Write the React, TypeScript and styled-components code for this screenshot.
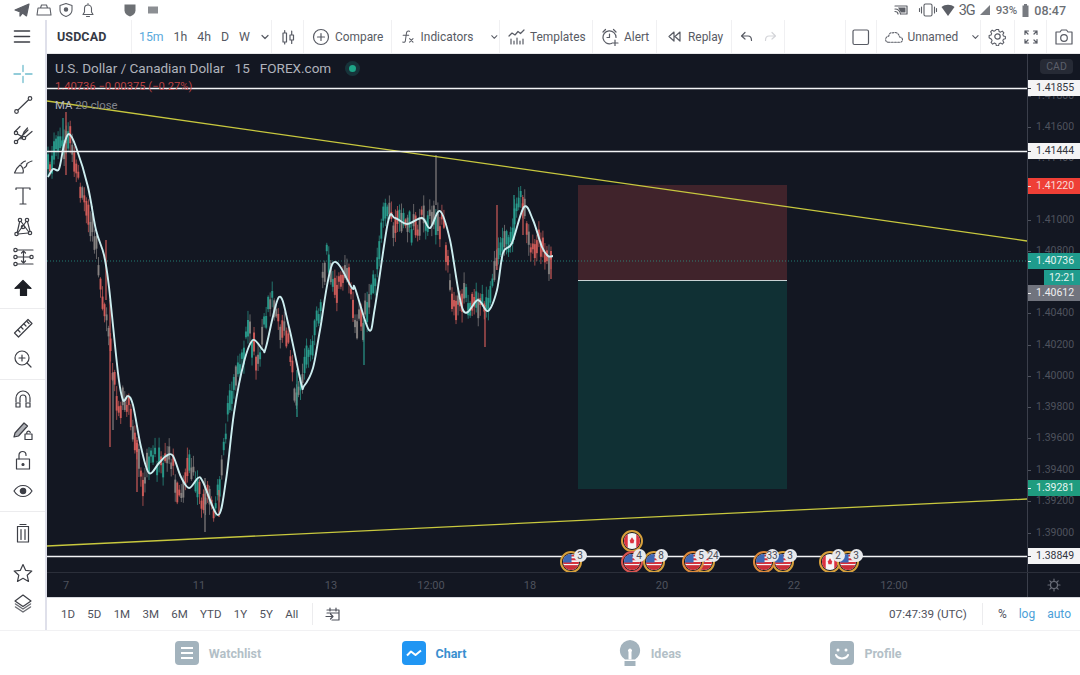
import React from 'react';
import styled, { createGlobalStyle } from 'styled-components';

const GlobalStyle = createGlobalStyle`
  html, body {
    margin: 0;
    padding: 0;
    background: #fff;
  }
  body {
    font-family: Roboto, "Liberation Sans", sans-serif;
  }
`;

const Page = styled.div`
  width: 1080px;
  height: 675px;
  display: flex;
  flex-direction: column;
  overflow: hidden;
  background: #fff;
  color: #4a4d57;
`;

const Spacer = styled.span<{ $w: number }>`
  width: ${({ $w }) => $w}px;
  flex: none;
`;

/* status bar */

const StatusBar = styled.div`
  height: 20px;
  flex: none;
  display: flex;
  align-items: center;
  justify-content: space-between;
  padding: 0 14px 0 14px;
  color: #5c5f66;
`;

const StatusGroup = styled.div<{ $gap: number }>`
  display: flex;
  align-items: center;
  gap: ${({ $gap }) => $gap}px;
`;

const Carrier = styled.span`
  font-size: 14.5px;
  letter-spacing: -1px;
  color: #62656b;
`;

const StatusText = styled.span<{ $size: number }>`
  font-size: ${({ $size }) => $size}px;
  font-weight: 500;
  color: #6c6f75;
`;

/* main frame */

const Workspace = styled.div`
  flex: 1;
  display: flex;
  min-height: 0;
`;

const LeftBar = styled.div`
  width: 45px;
  flex: none;
  display: flex;
  flex-direction: column;
  border-right: 2px solid #dfe0ea;
  color: #3d3f46;
`;

const MenuCell = styled.div`
  height: 34px;
  flex: none;
  display: flex;
  align-items: center;
  justify-content: center;
  margin-bottom: 5px;
  padding-right: 1px;
`;

const ToolGroup = styled.div<{ $top?: number }>`
  display: flex;
  flex-direction: column;
  padding: ${({ $top }) => $top ?? 0}px 0 5px;
`;

const ToolSlot = styled.div`
  height: 30.5px;
  display: flex;
  align-items: center;
  justify-content: center;
`;

const ToolDivider = styled.div<{ $gap?: number }>`
  height: 1px;
  background: #ececee;
  margin-bottom: ${({ $gap }) => $gap ?? 4}px;
`;

const MainColumn = styled.div`
  flex: 1;
  display: flex;
  flex-direction: column;
  min-width: 0;
`;

const TopToolbar = styled.div`
  height: 33px;
  flex: none;
  display: flex;
  align-items: stretch;
  font-size: 11.9px;
  border-bottom: 1px solid #e8e8ea;
`;

const Segment = styled.div<{ $width?: number; $gap?: number; $pad?: number; $plain?: boolean }>`
  width: ${({ $width }) => ($width ? `${$width}px` : 'auto')};
  flex: ${({ $width }) => ($width ? 'none' : '1')};
  display: flex;
  align-items: center;
  justify-content: ${({ $pad }) => ($pad === undefined ? 'center' : 'flex-start')};
  gap: ${({ $gap }) => $gap ?? 0}px;
  padding-left: ${({ $pad }) => $pad ?? 0}px;
  box-sizing: border-box;
  border-right: ${({ $plain }) => ($plain ? 'none' : '1px solid #f0f0f2')};
  color: #585b64;
  white-space: nowrap;
`;

const SymbolName = styled.span`
  font-size: 12.5px;
  font-weight: 700;
  color: #363a45;
  letter-spacing: 0.1px;
`;

const Interval = styled.span<{ $active?: boolean }>`
  font-size: 12.3px;
  color: ${({ $active }) => ($active ? '#5aa9dc' : '#555862')};
`;

const MutedIcon = styled.span`
  display: flex;
  color: #d4d5d9;
`;

/* chart */

const ChartArea = styled.div`
  flex: 1;
  display: flex;
  flex-direction: column;
  min-height: 0;
  background: #131722;
`;

const ChartRow = styled.div`
  flex: 1;
  display: flex;
  min-height: 0;
`;

const Pane = styled.div`
  position: relative;
  flex: 1;
  min-width: 0;
  overflow: hidden;
`;

const PaneDrawing = styled.svg`
  display: block;
  width: 980px;
  height: 519px;
`;

const Legend = styled.div`
  position: absolute;
  left: 8px;
  top: 6px;
  display: flex;
  flex-direction: column;
`;

const LegendTitle = styled.div`
  height: 16px;
  display: flex;
  align-items: center;
  font-size: 13.5px;
  color: #b0b3bc;
  white-space: pre;
`;

const StatusDot = styled.span`
  width: 7px;
  height: 7px;
  margin-left: 18px;
  border-radius: 50%;
  background: #1ea588;
  box-shadow: 0 0 0 4px rgba(38, 166, 154, 0.2);
`;

const LegendValues = styled.div`
  margin-top: 4px;
  height: 14px;
  font-size: 11.2px;
  line-height: 14px;
  color: #bb4244;
`;

const LegendStudy = styled.div`
  margin-top: 5px;
  height: 14px;
  font-size: 11.3px;
  line-height: 14px;
  color: #82858d;

  b {
    font-weight: 400;
    color: #b4b7be;
  }
`;

const EventPin = styled.div<{ $x: number; $y: number; $ring: string }>`
  position: absolute;
  left: ${({ $x }) => $x - 47 - 11}px;
  top: ${({ $y }) => $y - 54 - 11}px;
  width: 22px;
  height: 22px;
  box-sizing: border-box;
  border-radius: 50%;
  border: 2px solid ${({ $ring }) => $ring};
  background: #131722;
  display: flex;
  align-items: center;
  justify-content: center;
`;

const EventCount = styled.div<{ $x: number }>`
  position: absolute;
  left: ${({ $x }) => $x - 47 - 6.5}px;
  top: ${555 - 54 - 6.5}px;
  min-width: 13px;
  height: 13px;
  border-radius: 7px;
  background: #e8e9ec;
  color: #4a4d57;
  font-size: 10px;
  line-height: 13px;
  text-align: center;
`;

const PriceScale = styled.div`
  position: relative;
  width: 53px;
  flex: none;
  border-left: 1px solid #3b3f4b;
  box-sizing: border-box;
  overflow: hidden;
`;

const CurrencyChip = styled.div`
  position: absolute;
  left: 12px;
  top: 5px;
  width: 33px;
  height: 15px;
  border-radius: 4px;
  background: #262a35;
  color: #5b5f6a;
  font-size: 10.5px;
  line-height: 15px;
  text-align: center;
`;

const PriceTick = styled.div<{ $y: number }>`
  position: absolute;
  left: 0;
  right: 0;
  top: ${({ $y }) => $y - 54 - 7}px;
  height: 14px;
  padding-left: 8px;
  font-size: 10.5px;
  line-height: 14px;
  color: #4e525d;

  &::before {
    content: '';
    position: absolute;
    left: 0;
    top: 7px;
    width: 3px;
    height: 1px;
    background: #4e525d;
  }
`;

const PriceBadge = styled.div<{ $y: number; $bg: string; $fg: string }>`
  position: absolute;
  left: 0;
  right: 0;
  top: ${({ $y }) => $y - 54 - 8}px;
  height: 16px;
  padding-left: 8px;
  background: ${({ $bg }) => $bg};
  color: ${({ $fg }) => $fg};
  font-size: 10.5px;
  line-height: 16px;

  &::before {
    content: '';
    position: absolute;
    left: 0;
    top: 8px;
    width: 3px;
    height: 1px;
    background: ${({ $fg }) => $fg};
  }
`;

const Countdown = styled.div`
  position: absolute;
  right: 0;
  top: ${270 - 54}px;
  width: 36px;
  height: 15px;
  background: #1f9c8d;
  color: #e4f4f1;
  font-size: 10.5px;
  line-height: 15px;
  text-align: center;
`;

const TimeRow = styled.div`
  height: 24px;
  flex: none;
  display: flex;
  border-top: 1px solid #2b2f3a;
`;

const TimeScale = styled.div`
  position: relative;
  flex: 1;
`;

const TimeLabel = styled.span<{ $x: number }>`
  position: absolute;
  left: ${({ $x }) => $x - 47}px;
  top: 6px;
  transform: translateX(-50%);
  font-size: 11px;
  line-height: 14px;
  color: #4e525d;
`;

const ScaleCorner = styled.div`
  width: 53px;
  flex: none;
  box-sizing: border-box;
  border-left: 1px solid #3b3f4b;
  display: flex;
  align-items: center;
  justify-content: center;
  color: #6a6e79;
`;

/* bottom toolbar */

const BottomToolbar = styled.div`
  height: 33px;
  flex: none;
  display: flex;
  align-items: center;
  padding-left: 14px;
  font-size: 11.5px;
  color: #4f525c;
  border-top: 1px solid #d8d9de;
  box-sizing: border-box;
`;

const Ranges = styled.div`
  display: flex;
  gap: 12.3px;
  padding-right: 14px;
  height: 22px;
  align-items: center;
  border-right: 1px solid #ececee;
`;

const CalendarSlot = styled.div`
  margin-left: 12px;
  display: flex;
  align-items: center;
`;

const ClockText = styled.div`
  margin-left: auto;
  padding-right: 15px;
  height: 22px;
  line-height: 22px;
  font-size: 11.7px;
  border-right: 1px solid #ececee;
`;

const ScaleOptions = styled.div`
  display: flex;
  align-items: center;
  padding: 0 9px 0 15px;
  gap: 12px;
  font-size: 12px;
`;

const ScaleOption = styled.span<{ $on?: boolean }>`
  color: ${({ $on }) => ($on ? '#4c9fd8' : '#4f525c')};
`;

/* tabs */

const TabBar = styled.div`
  height: 45px;
  flex: none;
  display: grid;
  grid-template-columns: repeat(4, 1fr);
  padding: 0 106px 0 110px;
  border-top: 1px solid #f1f1f3;
  box-sizing: border-box;
`;

const TabItem = styled.div<{ $active?: boolean }>`
  display: flex;
  align-items: center;
  justify-content: center;
  gap: 10px;
  font-size: 12.5px;
  font-weight: 700;
  color: ${({ $active }) => ($active ? '#3a8fcf' : '#b3bfc7')};
`;

/* icons */

const Ico: React.FC<{ s?: number; w?: number; sw?: number; children: React.ReactNode }> = ({
  s = 24,
  w,
  sw = 1.2,
  children,
}) => (
  <svg
    width={w ?? s}
    height={s}
    viewBox={`0 0 ${w ?? s} ${s}`}
    fill="none"
    stroke="currentColor"
    strokeWidth={sw}
    strokeLinecap="round"
    strokeLinejoin="round"
  >
    {children}
  </svg>
);

const Chevron = () => (
  <Ico s={10}>
    <path d="M2 3.5 5 6.5 8 3.5" />
  </Ico>
);

const ToolIcons: Record<string, React.ReactNode> = {
  cross: (
    <g stroke="#6fbccd" strokeWidth="1.3">
      <path d="M11 2.5v6M11 13.5v6M2 11h6.5M13.5 11H20" />
    </g>
  ),
  line: (
    <>
      <circle cx="4.5" cy="17.5" r="1.8" />
      <circle cx="18" cy="4.5" r="1.8" />
      <path d="M6 16 16.6 5.8" />
    </>
  ),
  fork: (
    <>
      <circle cx="4" cy="18" r="1.7" />
      <circle cx="4" cy="9" r="1.7" />
      <circle cx="12" cy="14" r="1.7" />
      <path d="M5.2 16.7 16 6M5.5 10l5 3M2.5 8 8 2.5M13.5 13 20 7.5M9 15l3-7 3.5-4" />
    </>
  ),
  brush: (
    <>
      <path d="M2.5 18h8.5c1-3-.5-6.5-3-8-2.5 2-4.5 5-5.5 8Z" />
      <path d="M9 9c2-2 3-3 4.5-3M12 13c2-1 3-3 3-4.5 1.5-1 3-2 5-2.5" />
    </>
  ),
  text: <path d="M4 4.5V3h14v1.5M11 3v16M8 19h6" />,
  pattern: (
    <>
      <circle cx="4.5" cy="18" r="1.7" />
      <circle cx="8" cy="4" r="1.7" />
      <circle cx="15" cy="4" r="1.7" />
      <circle cx="18" cy="17" r="1.7" />
      <circle cx="11" cy="11" r="1.7" />
      <path d="m5.2 16.5 2.5-11M9 5.5 16.8 16M14.2 5.5 5.7 17M15.5 5.7 18 15.3M6 18l10.3-1" />
    </>
  ),
  measure: (
    <>
      <circle cx="3.5" cy="4" r="1.7" />
      <circle cx="3.5" cy="11" r="1.7" />
      <circle cx="3.5" cy="18" r="1.7" />
      <circle cx="19.5" cy="11" r="1.7" />
      <path d="M5.2 4H21M5.2 11H18M5.2 18H21M11.5 5.5v11" />
      <path d="m9.5 7 2-2 2 2M9.5 15l2 2 2-2" />
    </>
  ),
  arrow: <path d="M11 3.5 19 11.5 14.5 11 14.5 18.5H8.5L8.5 11 3 11.5Z" fill="#1c1e24" stroke="#1c1e24" />,
  ruler: (
    <>
      <path d="M2.5 16 16 2.5l4 4L6.5 20Z" />
      <path d="m6 13 2 2M9 10l2 2M12 7l2 2M15 4.5l2 2" />
    </>
  ),
  zoom: (
    <>
      <circle cx="10" cy="10" r="7" />
      <path d="M15 15l4 4M10 7v6M7 10h6" />
    </>
  ),
  magnet: (
    <>
      <path d="M4 14V10a7 7 0 0 1 14 0v4" />
      <path d="M8 14v-4a3 3 0 0 1 6 0v4" />
      <path d="M4 15h4v4H4zM14 15h4v4h-4z" />
    </>
  ),
  pencil: (
    <>
      <path d="M3 14 12 4l3.5 3-9 10-4.5 1Z" fill="#aeb0b5" />
      <path d="M13 15h7v5.5h-7zM14.8 15v-1.5a1.8 1.8 0 0 1 3.5 0" />
    </>
  ),
  lock: (
    <>
      <path d="M4.5 10h13v10h-13z" />
      <path d="M7 10V6a3.5 3.5 0 0 1 7 0v.5" />
      <circle cx="11" cy="15.5" r="1" fill="currentColor" />
    </>
  ),
  eye: (
    <>
      <path d="M2 11c2.5-4 5.5-5.5 9-5.5s6.5 1.5 9 5.5c-2.5 4-5.5 5.5-9 5.5S4.5 15 2 11Z" />
      <circle cx="11" cy="11" r="2.7" fill="currentColor" />
    </>
  ),
  trash: (
    <>
      <path d="M5.5 4.5h11V20h-11z" />
      <path d="M8 2.5h6M9 7.5v10M13 7.5v10M5.5 4.5h11" />
    </>
  ),
  star: <path d="m11 2.5 2.6 5.8 6.2.7-4.6 4.2 1.3 6.2L11 16.3l-5.5 3.1 1.3-6.2L2.2 9l6.2-.7Z" />,
  layers: (
    <>
      <path d="M11 3 19 9l-8 5.5L3 9Z" />
      <path d="M3.5 12 11 17l7.5-5M3.5 15l7.5 5 7.5-5" stroke="#6d6f75" strokeWidth="1.5" />
    </>
  ),
};

const toolOrder = [
  ['cross', 'line', 'fork', 'brush', 'text', 'pattern', 'measure', 'arrow'],
  ['ruler', 'zoom'],
  ['magnet', 'pencil', 'lock', 'eye'],
];

const UsFlag = () => (
  <svg width="16" height="16" viewBox="0 0 15 15">
    <clipPath id="flagClipUs">
      <circle cx="7.5" cy="7.5" r="7.5" />
    </clipPath>
    <g clipPath="url(#flagClipUs)">
      <rect width="15" height="15" fill="#f3f3f5" />
      <path d="M0 1.5h15M0 5h15M0 8.5h15M0 12h15" stroke="#d6333d" strokeWidth="1.8" />
      <rect y="10.5" width="15" height="4.5" fill="#c92f38" />
      <rect width="8" height="8" fill="#3d68b5" />
    </g>
  </svg>
);

const CaFlag = () => (
  <svg width="16" height="16" viewBox="0 0 15 15">
    <clipPath id="flagClipCa">
      <circle cx="7.5" cy="7.5" r="7.5" />
    </clipPath>
    <g clipPath="url(#flagClipCa)">
      <rect width="15" height="15" fill="#f5f5f6" />
      <rect width="3.5" height="15" fill="#dc3340" />
      <rect x="11.5" width="3.5" height="15" fill="#dc3340" />
      <path d="M7.5 4 9.5 7 9 9.5H6L5.5 7Z" fill="#dc3340" />
    </g>
  </svg>
);

const events = [
  { x: 571, y: 562, flag: 'us', ring: '#d8a13c' },
  { x: 632, y: 541, flag: 'ca', ring: '#d8a13c' },
  { x: 632, y: 562, flag: 'us', ring: '#d95550' },
  { x: 654, y: 562, flag: 'us', ring: '#d8a13c' },
  { x: 704, y: 562, flag: 'us', ring: '#d8a13c' },
  { x: 693, y: 562, flag: 'us', ring: '#dd8a3a' },
  { x: 783, y: 562, flag: 'us', ring: '#d8a13c' },
  { x: 764, y: 562, flag: 'us', ring: '#dd8a3a' },
  { x: 830, y: 562, flag: 'ca', ring: '#d8a13c' },
  { x: 848, y: 562, flag: 'us', ring: '#d8a13c' },
];

const eventCounts = [
  { x: 580, text: '3' },
  { x: 639, text: '4' },
  { x: 661, text: '8' },
  { x: 701, text: '5' },
  { x: 713, text: '24' },
  { x: 772, text: '33' },
  { x: 790, text: '3' },
  { x: 838, text: '2' },
  { x: 856, text: '3' },
];

const priceTicks = [
  ['1.41800', 96],
  ['1.41600', 127],
  ['1.41400', 158],
  ['1.41000', 220],
  ['1.40800', 251],
  ['1.40400', 313],
  ['1.40200', 345],
  ['1.40000', 376],
  ['1.39800', 407],
  ['1.39600', 438],
  ['1.39400', 470],
  ['1.39200', 501],
  ['1.39000', 533],
] as const;

const priceBadges = [
  { y: 88, text: '1.41855', bg: '#f4f4f5', fg: '#33363f' },
  { y: 151, text: '1.41444', bg: '#f4f4f5', fg: '#33363f' },
  { y: 186, text: '1.41220', bg: '#ef3f36', fg: '#f7dcd9' },
  { y: 261, text: '1.40736', bg: '#1f9c8d', fg: '#e4f4f1' },
  { y: 292.5, text: '1.40612', bg: '#71747e', fg: '#eeeef0' },
  { y: 488, text: '1.39281', bg: '#1f9c7f', fg: '#e4f4f1' },
  { y: 556, text: '1.38849', bg: '#f4f4f5', fg: '#33363f' },
];

const timeLabels = [
  ['7', 66],
  ['11', 199],
  ['13', 331],
  ['12:00', 431],
  ['18', 530],
  ['20', 662],
  ['22', 794],
  ['12:00', 894],
] as const;

// moving average traced from the chart, page coordinates
const maPoints: [number, number][] = [
  [48, 177], [53, 169], [59, 169], [64, 145], [69, 134], [76, 147], [88, 187], [96, 230], [104, 255],
  [109, 287], [118, 373], [123, 400], [128, 396], [133, 405], [141, 447], [149, 473], [159, 463],
  [166, 456], [173, 456], [181, 477], [189, 488], [198, 478], [203, 482], [218, 515], [226, 480],
  [234, 413], [244, 362], [253, 340], [263, 350], [266, 347], [279, 297], [289, 327], [301, 383],
  [304, 386], [313, 368], [320, 330], [333, 263], [352, 288], [355, 288], [369, 330], [375, 307],
  [388, 222], [395, 218], [407, 224], [422, 218], [430, 228], [440, 211], [450, 240], [463, 310],
  [478, 300], [488, 311], [497, 290], [503, 253], [512, 243], [524, 207], [533, 220], [542, 247],
  [548, 256], [553, 256],
];

const maAt = (x: number) => {
  if (x <= maPoints[0][0]) return maPoints[0][1];
  for (let i = 1; i < maPoints.length; i++) {
    const [x1, y1] = maPoints[i];
    if (x <= x1) {
      const [x0, y0] = maPoints[i - 1];
      return y0 + ((y1 - y0) * (x - x0)) / (x1 - x0);
    }
  }
  return maPoints[maPoints.length - 1][1];
};

const smoothPath = (pts: [number, number][]) => {
  let d = `M${pts[0][0]} ${pts[0][1]}`;
  for (let i = 0; i < pts.length - 1; i++) {
    const p0 = pts[Math.max(i - 1, 0)];
    const p1 = pts[i];
    const p2 = pts[i + 1];
    const p3 = pts[Math.min(i + 2, pts.length - 1)];
    const c1x = p1[0] + (p2[0] - p0[0]) / 6;
    const c1y = p1[1] + (p2[1] - p0[1]) / 6;
    const c2x = p2[0] - (p3[0] - p1[0]) / 6;
    const c2y = p2[1] - (p3[1] - p1[1]) / 6;
    d += `C${c1x.toFixed(1)} ${c1y.toFixed(1)} ${c2x.toFixed(1)} ${c2y.toFixed(1)} ${p2[0]} ${p2[1]}`;
  }
  return d;
};

let seed = 4711;
const rand = () => {
  seed = (seed * 16807) % 2147483647;
  return seed / 2147483647;
};

const RED = '#e0625e';
const GREEN = '#2ba594';
const GREY = '#8f8a88';

const candles = Array.from({ length: 250 }, (_, i) => {
  const x = 48 + i * 2.02;
  const mid = maAt(Math.min(x + 6, 553)) + Math.sin(x / 3.1) * 9 + (rand() - 0.5) * 20;
  const bodyH = 5 + rand() * 15;
  const wickTop = mid - bodyH / 2 - 1 - rand() * 10;
  const wickBottom = mid + bodyH / 2 + 1 + rand() * 10;
  const slope = maAt(x + 8) - maAt(x - 2);
  const r = rand();
  const colour = r < 0.28 ? GREY : slope + (rand() - 0.5) * 18 > 0 ? RED : GREEN;
  return { x, mid, bodyH, wickTop, wickBottom, colour };
});

const spikes: [number, number, number, string][] = [
  [63, 118, 155, GREEN], [66, 112, 175, RED], [106, 240, 300, RED], [110, 300, 447, RED],
  [113, 372, 430, GREY], [137, 440, 492, RED], [205, 478, 532, GREY], [219, 490, 517, RED],
  [297, 370, 417, GREEN], [364, 320, 365, GREEN], [436, 155, 205, GREY], [485, 305, 347, RED],
  [497, 205, 270, RED], [514, 195, 240, GREEN], [523, 197, 235, RED], [551, 255, 279, RED],
];

const Chart = () => (
  <PaneDrawing viewBox="47 54 980 519">
    <rect x="578" y="185" width="209" height="95" fill="#40232b" />
    <rect x="578" y="281" width="209" height="208" fill="#103034" />
    <path d="M578 280.5H787" stroke="#c9d2d4" strokeWidth="1" />
    <path d="M47 261H1027" stroke="#2a9d8f" strokeOpacity="0.75" strokeDasharray="1 2" />
    {candles.map((c) => (
      <g key={c.x} stroke={c.colour} strokeOpacity="0.82">
        <path d={`M${c.x} ${c.wickTop}V${c.wickBottom}`} strokeWidth="0.8" />
        <path d={`M${c.x} ${c.mid - c.bodyH / 2}V${c.mid + c.bodyH / 2}`} strokeWidth="2" />
      </g>
    ))}
    {spikes.map(([x, y1, y2, colour]) => (
      <path key={x} d={`M${x} ${y1}V${y2}`} stroke={colour} strokeWidth="1.3" strokeOpacity="0.85" />
    ))}
    <path d={smoothPath(maPoints)} fill="none" stroke="#cdeef0" strokeWidth="1.9" />
    <path d="M47 101 1027 241" stroke="#c8c83e" strokeWidth="1.3" />
    <path d="M47 546 1027 499" stroke="#c8c83e" strokeWidth="1.3" />
    <path d="M47 88.5H1027M47 151.5H1027M47 556.5H1027" stroke="#f2f3f5" strokeWidth="1.3" />
  </PaneDrawing>
);

const App: React.FC = () => (
  <Page>
    <GlobalStyle />
    <StatusBar>
      <StatusGroup $gap={0}>
        <StatusGroup $gap={6}>
          <Ico s={16}>
            <path d="M1 8 15 2l-2.5 12L8.5 11 6 14V10.5L12 4.5 5 9.5Z" fill="currentColor" />
          </Ico>
          <Ico s={16} sw={1.1}>
            <path d="M2 6h12l1 7H1ZM4.5 6l1-3h5l1 3" />
          </Ico>
          <Ico s={16} sw={1.1}>
            <path d="M8 1.5 14 3.5V8c0 3-2.5 5.3-6 6.5C4.5 13.3 2 11 2 8V3.5Z" />
            <circle cx="8" cy="7.5" r="1.7" fill="currentColor" />
          </Ico>
          <Ico s={16} sw={1.1}>
            <path d="M3 12.5h10l-1.5-2.5V6.5a3.500 3.500 0 0 0-7 0V10ZM6.5 14.5h3M8 1.5v1.5" />
          </Ico>
        </StatusGroup>
        <StatusGroup $gap={8}>
          <Spacer $w={18} />
          <Ico s={16}>
            <path d="M2.5 2.5h11v6c0 3-2.5 5-5.5 6-3-1-5.5-3-5.5-6Z" fill="#6d7074" stroke="none" />
          </Ico>
          <Ico s={14}>
            <path d="M2 3.5h10v7H2Z" fill="#8c8f93" stroke="none" />
          </Ico>
        </StatusGroup>
      </StatusGroup>
      <StatusGroup $gap={5}>
        <StatusGroup $gap={4}>
          <StatusGroup $gap={2}>
            <StatusGroup $gap={8}>
              <Ico s={16}>
                <path d="M2 4h12v8H8" />
                <path d="M2 7c3 0 5 2 5.5 5M2 9.5c1.5 0 3 1 3 2.5" />
                <path d="M5 5.5h7.5v5H8Z" fill="currentColor" stroke="none" />
              </Ico>
              <Ico s={16} w={22} sw={1.1}>
                <rect x="7" y="2" width="8" height="12" rx="1.5" />
                <path d="M4.5 5v6M17.5 5v6M2.5 6.5v3M19.5 6.5v3" />
              </Ico>
            </StatusGroup>
            <Ico s={14}>
              <path d="M0.5 4 7 13 13.5 4C11.5 2.5 9.5 1.8 7 1.8S2.5 2.5 0.5 4Z" fill="currentColor" stroke="none" />
            </Ico>
          </StatusGroup>
          <Carrier>3G</Carrier>
          <Ico s={12}>
            <path d="M1 11 11 1v10Z" fill="#7a7d82" stroke="none" />
          </Ico>
        </StatusGroup>
        <StatusText $size={11.5}>93%</StatusText>
        <Ico s={14} w={7}>
          <path d="M0.5 2.5h6V14h-6ZM2 1h3v1.5H2Z" fill="#777a80" stroke="none" />
        </Ico>
        <StatusText $size={12.5}>08:47</StatusText>
      </StatusGroup>
    </StatusBar>

    <Workspace>
      <LeftBar>
        <MenuCell>
          <Ico s={22} sw={1.6}>
            <path d="M3.5 5h15M3.5 10.5h15M3.5 16h15" />
          </Ico>
        </MenuCell>
        {toolOrder.map((group, index) => (
          <React.Fragment key={group[0]}>
            <ToolGroup>
              {group.map((name) => (
                <ToolSlot key={name}>
                  <Ico s={22}>{ToolIcons[name]}</Ico>
                </ToolSlot>
              ))}
            </ToolGroup>
            <ToolDivider $gap={index === 2 ? 6 : 4} />
          </React.Fragment>
        ))}
        <ToolGroup>
          <ToolSlot>
            <Ico s={22}>{ToolIcons.trash}</Ico>
          </ToolSlot>
        </ToolGroup>
        <ToolGroup $top={4}>
          <ToolSlot>
            <Ico s={22}>{ToolIcons.star}</Ico>
          </ToolSlot>
          <ToolSlot>
            <Ico s={22}>{ToolIcons.layers}</Ico>
          </ToolSlot>
        </ToolGroup>
      </LeftBar>

      <MainColumn>
        <TopToolbar>
          <Segment $width={85} $pad={10}>
            <SymbolName>USDCAD</SymbolName>
          </Segment>
          <Segment $width={140} $pad={7} $gap={10}>
            <Interval $active>15m</Interval>
            <Interval>1h</Interval>
            <Interval>4h</Interval>
            <Interval>D</Interval>
            <Interval>W</Interval>
            <Chevron />
          </Segment>
          <Segment $width={32}>
            <Ico s={18}>
              <path d="M4 5h3.5v9H4ZM5.7 2.5V5M5.7 14v2M11 7h3.5v5H11ZM12.7 3v4M12.7 12v3.5" />
            </Ico>
          </Segment>
          <Segment $width={88} $pad={8} $gap={5}>
            <Ico s={18}>
              <circle cx="9" cy="9" r="7.5" />
              <path d="M9 5.5v7M5.5 9h7" />
            </Ico>
            Compare
          </Segment>
          <Segment $width={108} $pad={9} $gap={5}>
            <Ico s={17}>
              <path d="M10 2.5C7.5 1.5 6.5 3 6.3 5L5 14c-.3 1.5-1.5 1.5-3 1M2.5 7H9M10 11l4 4M14 11l-4 4" />
            </Ico>
            Indicators
            <Spacer $w={7} />
            <Chevron />
          </Segment>
          <Segment $width={93} $pad={8} $gap={4}>
            <Ico s={18}>
              <path d="M1 8l3-3 3 2 3-3.5 2.5 2L16 2" />
              <path d="M3 16v-5M6 16v-3M9 16v-6M12 16v-3M15 16v-5" />
            </Ico>
            Templates
          </Segment>
          <Segment $width={64} $pad={8} $gap={5}>
            <Ico s={18}>
              <path d="M10.5 15.5A6.5 6.5 0 1 1 15 9.5M8.5 6v3.5H6M2 4l2.5-2.5M15 4l-2.5-2.5M14 12v6M11 15h6" />
            </Ico>
            Alert
          </Segment>
          <Segment $width={75} $pad={10} $gap={6}>
            <Ico s={15}>
              <path d="M7 3 2 7.5 7 12ZM13 3 8 7.5 13 12Z" />
            </Ico>
            Replay
          </Segment>
          <Segment $width={53} $pad={8} $gap={11}>
            <Ico s={13}>
              <path d="M5 2.5 1.5 6 5 9M1.5 6H8c2.5 0 3.5 2 3.5 4.5" />
            </Ico>
            <MutedIcon>
              <Ico s={13}>
                <path d="M8 2.5 11.5 6 8 9M11.5 6H5C2.5 6 1.5 8 1.5 10.5" />
              </Ico>
            </MutedIcon>
          </Segment>
          <Segment />
          <Segment $width={31}>
            <Ico s={18}>
              <rect x="1" y="2" width="15.5" height="14.5" rx="1.5" />
            </Ico>
          </Segment>
          <Segment $width={104} $pad={7} $gap={4}>
            <Ico s={20} w={22}>
              <path
                d="M5 16h13c4 0 4-6-.5-6C17 6 13 3.5 10 5.5 8 4.5 5.5 6 5.5 9 1 9.5 .5 16 5 16Z"
                strokeDasharray="2 1.5"
              />
            </Ico>
            Unnamed
            <Spacer $w={5} />
            <Chevron />
          </Segment>
          <Segment $width={34}>
            <Ico s={19}>
              <circle cx="9.5" cy="9.5" r="2.7" />
              <path
                d="M8.2 1.5h2.6l.5 2.3 1.7.8 2-1.2 1.8 1.9-1.2 2 .7 1.7 2.2.5v2.600l-2.2.5-.7 1.7 1.2 2-1.8 1.9-2-1.2-1.7.7-.5 2.3H8.2l-.5-2.3-1.7-.7-2 1.2-1.8-1.9 1.2-2-.7-1.7L0 11v-2.6l2.2-.5.7-1.7-1.2-2 1.8-1.9 2 1.2 1.7-.8Z"
                transform="translate(1.1 1.1) scale(.88)"
              />
            </Ico>
          </Segment>
          <Segment $width={32}>
            <Ico s={16}>
              <path d="M2 5.5V2h3.5M14 5.5V2h-3.5M2 10.5V14h3.5M14 10.5V14h-3.5M2 2l3 3M14 2l-3 3M2 14l3-3M14 14l-3-3" />
            </Ico>
          </Segment>
          <Segment $width={33} $plain>
            <Ico s={20}>
              <path d="M2 5h4l1.5-2h5L14 5h4v12H2Z" />
              <circle cx="10" cy="11" r="3.3" />
            </Ico>
          </Segment>
        </TopToolbar>

        <ChartArea>
          <ChartRow>
            <Pane>
              <Chart />
              <Legend>
                <LegendTitle>
                  U.S. Dollar / Canadian Dollar   15   FOREX.com
                  <StatusDot />
                </LegendTitle>
                <LegendValues>1.40736 −0.00375 (−0.27%)</LegendValues>
                <LegendStudy>
                  <b>MA</b> 20 close
                </LegendStudy>
              </Legend>
              {events.map((e) => (
                <EventPin key={`${e.x}-${e.y}`} $x={e.x} $y={e.y} $ring={e.ring}>
                  {e.flag === 'us' ? <UsFlag /> : <CaFlag />}
                </EventPin>
              ))}
              {eventCounts.map((c) => (
                <EventCount key={c.x} $x={c.x}>
                  {c.text}
                </EventCount>
              ))}
            </Pane>
            <PriceScale>
              <CurrencyChip>CAD</CurrencyChip>
              {priceTicks.map(([text, y]) => (
                <PriceTick key={text} $y={y}>
                  {text}
                </PriceTick>
              ))}
              {priceBadges.map((b) => (
                <PriceBadge key={b.text} $y={b.y} $bg={b.bg} $fg={b.fg}>
                  {b.text}
                </PriceBadge>
              ))}
              <Countdown>12:21</Countdown>
            </PriceScale>
          </ChartRow>
          <TimeRow>
            <TimeScale>
              {timeLabels.map(([text, x]) => (
                <TimeLabel key={x} $x={x}>
                  {text}
                </TimeLabel>
              ))}
            </TimeScale>
            <ScaleCorner>
              <Ico s={14}>
                <circle cx="7" cy="7" r="3.5" />
                <path d="M7 1v2M7 11v2M1 7h2M11 7h2M2.8 2.8l1.4 1.4M9.8 9.8l1.4 1.4M2.8 11.2l1.4-1.4M9.8 4.2l1.4-1.4" />
              </Ico>
            </ScaleCorner>
          </TimeRow>
        </ChartArea>

        <BottomToolbar>
          <Ranges>
            {['1D', '5D', '1M', '3M', '6M', 'YTD', '1Y', '5Y', 'All'].map((r) => (
              <span key={r}>{r}</span>
            ))}
          </Ranges>
          <CalendarSlot>
            <Ico s={16}>
              <path d="M2 4h12v10H7M5 2v3M11 2v3M2 7h12M1 10.5h7M5.5 8l2.5 2.5L5.5 13" />
            </Ico>
          </CalendarSlot>
          <ClockText>07:47:39 (UTC)</ClockText>
          <ScaleOptions>
            <ScaleOption>%</ScaleOption>
            <ScaleOption $on>log</ScaleOption>
            <ScaleOption $on>auto</ScaleOption>
          </ScaleOptions>
        </BottomToolbar>
      </MainColumn>
    </Workspace>

    <TabBar>
      <TabItem>
        <svg width="24" height="24" viewBox="0 0 24 24">
          <rect width="24" height="24" rx="4" fill="#a3b3bd" />
          <path d="M6 7h12M6 12h12M6 17h12" stroke="#fff" strokeWidth="2" />
        </svg>
        Watchlist
      </TabItem>
      <TabItem $active>
        <svg width="24" height="24" viewBox="0 0 24 24">
          <rect width="24" height="24" rx="4" fill="#2196f3" />
          <path d="M5 14.5 9 10.5 13.5 14 19 9.5" fill="none" stroke="#fff" strokeWidth="2" strokeLinejoin="round" />
        </svg>
        Chart
      </TabItem>
      <TabItem>
        <svg width="22" height="26" viewBox="0 0 22 26">
          <path d="M11 0a10.5 10.5 0 0 0-5 19.5h10A10.5 10.5 0 0 0 11 0Z" fill="#a3b3bd" />
          <path d="M9.5 19.5V12a2 2 0 1 1 3 0v7.5" fill="#fff" />
          <rect x="5.5" y="21" width="11" height="5" fill="#a3b3bd" />
        </svg>
        Ideas
      </TabItem>
      <TabItem>
        <svg width="24" height="24" viewBox="0 0 24 24">
          <rect width="24" height="24" rx="4" fill="#a3b3bd" />
          <circle cx="8" cy="9" r="1.5" fill="#fff" />
          <circle cx="16" cy="9" r="1.5" fill="#fff" />
          <path d="M6 14c2 4.5 10 4.5 12 0" fill="none" stroke="#fff" strokeWidth="2" strokeLinecap="round" />
        </svg>
        Profile
      </TabItem>
    </TabBar>
  </Page>
);

export default App;
